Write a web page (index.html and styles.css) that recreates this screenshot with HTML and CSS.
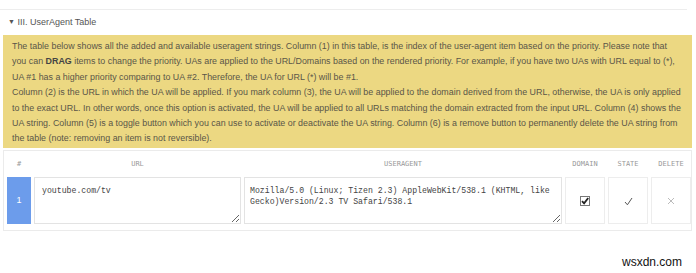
FILE: index.html
```html
<!DOCTYPE html>
<html>
<head>
<meta charset="utf-8">
<link rel="stylesheet" href="styles.css">
</head>
<body>
<div class="page">
  <div class="prev"></div>
  <div class="title"><span class="arrow">▼</span> III. UserAgent Table</div>
  <div class="notice">The table below shows all the added and available useragent strings. Column (1) in this table, is the index of the user-agent item based on the priority. Please note that<br>you can <b>DRAG</b> items to change the priority. UAs are applied to the URL/Domains based on the rendered priority. For example, if you have two UAs with URL equal to (*),<br>UA #1 has a higher priority comparing to UA #2. Therefore, the UA for URL (*) will be #1.<br>Column (2) is the URL in which the UA will be applied. If you mark column (3), the UA will be applied to the domain derived from the URL, otherwise, the UA is only applied<br>to the exact URL. In other words, once this option is activated, the UA will be applied to all URLs matching the domain extracted from the input URL. Column (4) shows the<br>UA string. Column (5) is a toggle button which you can use to activate or deactivate the UA string. Column (6) is a remove button to permanently delete the UA string from<br>the table (note: removing an item is not reversible).</div>
  <div class="table-box">
    <table class="ua-table">
      <thead>
        <tr>
          <th class="c-idx">#</th>
          <th class="c-url">URL</th>
          <th class="c-ua">USERAGENT</th>
          <th class="c-sm">DOMAIN</th>
          <th class="c-sm">STATE</th>
          <th class="c-sm">DELETE</th>
        </tr>
      </thead>
      <tbody>
        <tr>
          <td class="idx">1</td>
          <td class="field"><textarea class="ta ta-url">youtube.com/tv</textarea></td>
          <td class="field"><textarea class="ta ta-ua">Mozilla/5.0 (Linux; Tizen 2.3) AppleWebKit/538.1 (KHTML, like Gecko)Version/2.3 TV Safari/538.1</textarea></td>
          <td class="box">
            <svg class="chk" width="10" height="10" viewBox="0 0 10 10"><rect x="0.5" y="0.5" width="9" height="9" fill="#fff" stroke="#777"/><path d="M2 5.2 L4.1 7.4 L8.2 2" fill="none" stroke="#222" stroke-width="1.8"/></svg>
          </td>
          <td class="box">
            <svg width="9" height="9" viewBox="0 0 9 9"><path d="M1 5 L3.4 7.8 L8 1" fill="none" stroke="#555" stroke-width="1"/></svg>
          </td>
          <td class="box">
            <svg width="8" height="8" viewBox="0 0 8 8"><path d="M1 1 L7 7 M7 1 L1 7" fill="none" stroke="#aaa" stroke-width="0.8"/></svg>
          </td>
        </tr>
      </tbody>
    </table>
  </div>
  <div class="watermark">wsxdn.com</div>
</div>
</body>
</html>
```
FILE: styles.css
```css
html, body {
  margin: 0;
  padding: 0;
  background: #fff;
}
.page {
  position: relative;
  width: 696px;
  height: 273px;
  font-family: "Liberation Sans", Arial, sans-serif;
  color: #555;
}
.prev {
  width: 687px;
  height: 9px;
  border-bottom: 1px solid #ededed;
}
.title {
  height: 25px;
  line-height: 24px;
  padding-left: 8px;
  font-size: 9px;
  color: #555;
}
.arrow {
  font-size: 7px;
  position: relative;
  top: -1px;
}
.notice {
  margin: 0 4px 0 3px;
  padding: 4px 0 1px 9px;
  background: #ecd882;
  font-size: 8.9px;
  line-height: 15.4px;
  color: #5a5648;
  white-space: nowrap;
}
.notice b {
  color: #444;
}
.table-box {
  margin: 2px 4px 0 3px;
  border: 1px solid #ebebeb;
  padding-bottom: 3px;
}
.ua-table {
  width: 100%;
  border-spacing: 3px;
  table-layout: fixed;
}
.ua-table th {
  height: 20px;
  padding: 0;
  font-family: "DejaVu Sans Mono", "Liberation Mono", monospace;
  font-weight: normal;
  font-size: 7px;
  color: #999;
  text-align: center;
}
.c-idx { width: 24px; }
.c-url { width: 207px; }
.c-ua { width: 318px; }
.c-sm { width: 40px; }
.ua-table td {
  height: 47px;
  padding: 0;
  text-align: center;
  vertical-align: middle;
}
.idx {
  background: #6c9ceb;
  color: #fff;
  font-size: 9px;
}
.ua-table td.field {
  vertical-align: top;
}
.ta {
  display: block;
  box-sizing: border-box;
  width: 100%;
  height: 47px;
  margin: 0;
  border: 1px solid #e3e3e3;
  padding: 7px 4px 0 5px;
  font-family: "Liberation Mono", monospace;
  font-size: 8.2px;
  line-height: 11px;
  color: #444;
  background: #fff;
  resize: both;
  overflow: hidden;
  outline: none;
}
.ta-url {
  padding-left: 7px;
}
.ua-table td.box {
  border: 1px solid #ededed;
  box-sizing: border-box;
}
.box svg {
  display: inline-block;
  vertical-align: middle;
}
.watermark {
  position: absolute;
  left: 622px;
  top: 255px;
  font-family: "Liberation Sans", Arial, sans-serif;
  font-size: 12px;
  color: #111;
}
```
